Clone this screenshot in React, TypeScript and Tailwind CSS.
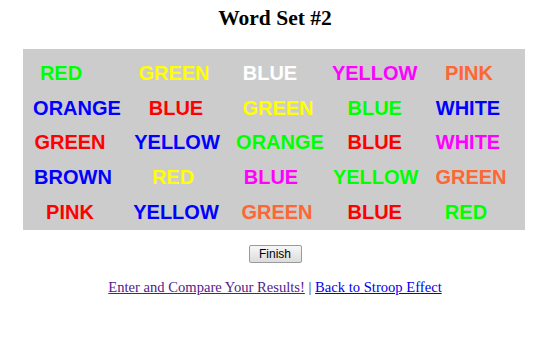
import React from "react";

type W = { t: string; c: string; o: string };

const rows: W[][] = [
  [
    { t: "RED", c: "text-[#00ff00]", o: "-translate-x-[9px]" },
    { t: "GREEN", c: "text-[#ffff00]", o: "-translate-x-[1px]" },
    { t: "BLUE", c: "text-[#ffffff]", o: "-translate-x-[5px]" },
    { t: "YELLOW", c: "text-[#ff00ff]", o: "translate-x-0" },
    { t: "PINK", c: "text-[#ff6633]", o: "translate-x-[1px]" },
  ],
  [
    { t: "ORANGE", c: "text-[#0000ff]", o: "translate-x-[7px]" },
    { t: "BLUE", c: "text-[#ff0000]", o: "translate-x-[1px]" },
    { t: "GREEN", c: "text-[#ffff00]", o: "translate-x-[3px]" },
    { t: "BLUE", c: "text-[#00ff00]", o: "translate-x-0" },
    { t: "WHITE", c: "text-[#0000ff]", o: "translate-x-0" },
  ],
  [
    { t: "GREEN", c: "text-[#ff0000]", o: "translate-x-0" },
    { t: "YELLOW", c: "text-[#0000ff]", o: "translate-x-[2px]" },
    { t: "ORANGE", c: "text-[#00ff00]", o: "translate-x-[5px]" },
    { t: "BLUE", c: "text-[#ff0000]", o: "translate-x-0" },
    { t: "WHITE", c: "text-[#ff00ff]", o: "translate-x-0" },
  ],
  [
    { t: "BROWN", c: "text-[#0000ff]", o: "translate-x-[3px]" },
    { t: "RED", c: "text-[#ffff00]", o: "-translate-x-[2px]" },
    { t: "BLUE", c: "text-[#ff00ff]", o: "-translate-x-[4px]" },
    { t: "YELLOW", c: "text-[#00ff00]", o: "translate-x-[1px]" },
    { t: "GREEN", c: "text-[#ff6633]", o: "translate-x-[3px]" },
  ],
  [
    { t: "PINK", c: "text-[#ff0000]", o: "translate-x-0" },
    { t: "YELLOW", c: "text-[#0000ff]", o: "translate-x-[1px]" },
    { t: "GREEN", c: "text-[#ff6633]", o: "translate-x-[2px]" },
    { t: "BLUE", c: "text-[#ff0000]", o: "translate-x-0" },
    { t: "RED", c: "text-[#00ff00]", o: "-translate-x-[2px]" },
  ],
];

export default function App() {
  return (
    <div className="w-[550px] h-[358px] bg-white font-['Liberation_Serif',serif] text-black">
      <h2 className="pt-[6px] text-center text-[21.5px] leading-[24px] font-bold">
        Word Set #2
      </h2>
      <div className="ml-[23px] mt-[19px] w-[502px] bg-[#cccccc] pt-[7px] font-['Liberation_Sans',Arial,sans-serif] text-[20px] font-bold leading-[23px]">
        {rows.map((r, i) => (
          <div
            key={i}
            className="grid h-[34.8px] grid-cols-[94px_116px_84px_115.4px_71.2px] items-center"
          >
            {r.map((w, j) => (
              <div key={j} className="flex justify-center whitespace-nowrap">
                <span className={`${w.c} ${w.o}`}>{w.t}</span>
              </div>
            ))}
          </div>
        ))}
      </div>
      <div className="mt-[15px] flex justify-center">
        <button className="h-[18px] w-[53px] rounded-[2px] border border-[#9a9a9a] bg-gradient-to-b from-[#f7f7f7] to-[#dcdcdc] font-['Liberation_Sans',Arial,sans-serif] text-[12px] leading-[16px] text-black">
          Finish
        </button>
      </div>
      <div className="mt-[15px] text-center text-[14.6px] leading-[18px]">
        <a href="#" className="text-[#551a8b] underline">
          Enter and Compare Your Results!
        </a>
        <span className="text-[#333333]"> | </span>
        <a href="#" className="text-[#0000ee] underline">
          Back to Stroop Effect
        </a>
      </div>
    </div>
  );
}
